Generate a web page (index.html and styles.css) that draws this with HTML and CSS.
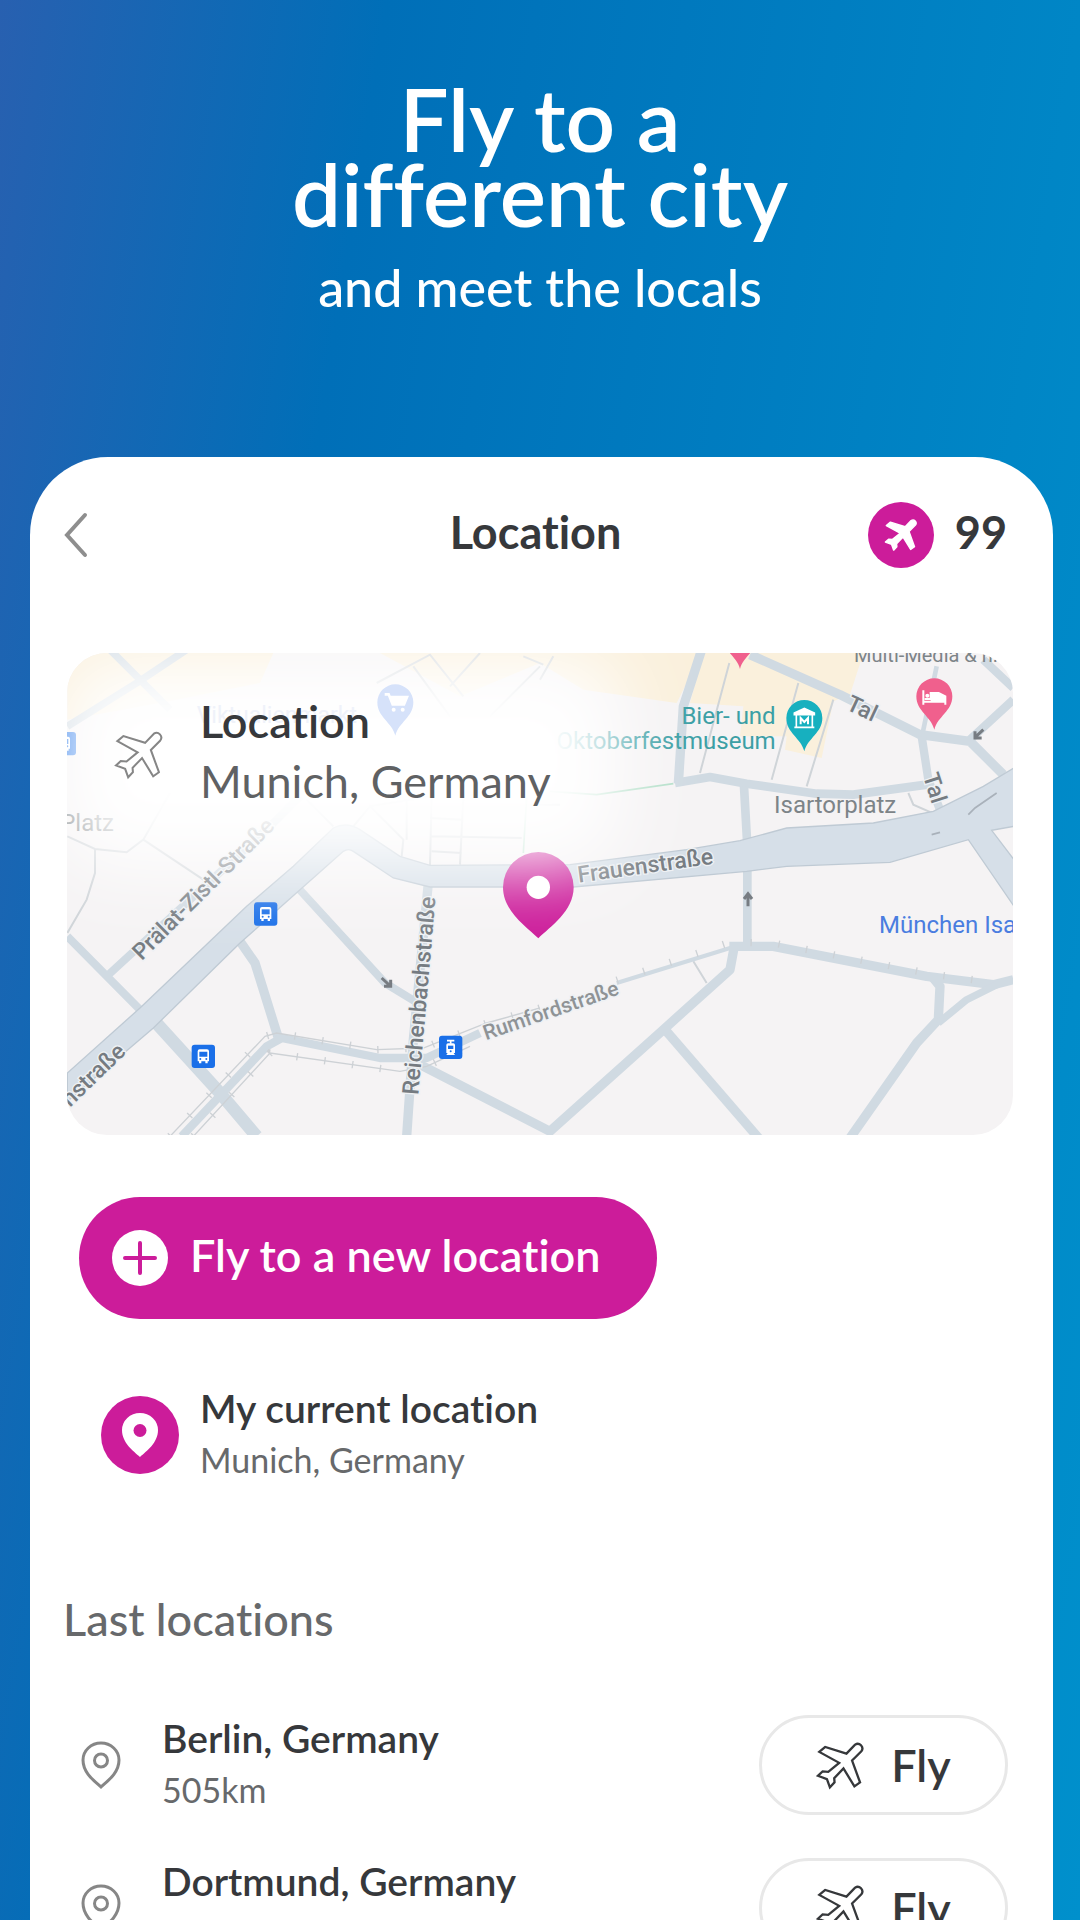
FILE: index.html
```
<!DOCTYPE html>
<html lang="en">
<head>
    <meta charset="UTF-8">
    <meta name="viewport" content="width=device-width, initial-scale=1.0">
    <title>Location</title>
    <link rel="stylesheet" href="styles.css">
</head>
<body>
    <!--shared icons-->
    <svg class="sprite" width="0" height="0" aria-hidden="true">
        <symbol id="plane" viewBox="0 0 148 148">
            <path d="M28 18 10 33 70 66 37 93 20 92 6 105 33 115 42 140 56 125 55 112 83 83 116 137 133 125 109 59 137 31A14 14 0 0 0 118 11L92 38Z"/>
        </symbol>
        <symbol id="pin" viewBox="0 0 80 96">
            <path d="M40 92C27 80 4 64 4 38a36 34 0 0 1 72 0C76 64 53 80 40 92Z"/>
            <circle class="dot" cx="40" cy="39" r="13"/>
        </symbol>
    </svg>

    <div class="page">
        <header class="hero">
            <h1>Fly to a<br>different city</h1>
            <p>and meet the locals</p>
        </header>

        <main class="card">
            <div class="topbar">
                <button class="back" aria-label="Back">
                    <svg width="24" height="46" viewBox="0 0 24 46"><path d="M21 3 3 23 21 43"/></svg>
                </button>
                <h2>Location</h2>
                <div class="credits">
                    <span class="badge"><svg width="34" height="34"><use href="#plane"/></svg></span>
                    <span>99</span>
                </div>
            </div>

            <section class="map">
                <svg class="map-art" viewBox="21 40 2838 1446" role="img" aria-label="Map of Munich">
                    <defs>
                        <filter id="soft" x="-40%" y="-70%" width="180%" height="240%"><feGaussianBlur stdDeviation="115"/></filter>
                        <g id="bus">
                            <rect width="70" height="70" rx="9" fill="#1a6fe8"/>
                            <path d="M18 20q0-6 6-6h22q6 0 6 6v30h-4v6h-7v-6H29v6h-7v-6h-4Z" fill="#fff"/>
                            <path d="M23 21h24v15H23Z" fill="#1a6fe8"/>
                            <circle cx="26" cy="43" r="3" fill="#1a6fe8"/>
                            <circle cx="44" cy="43" r="3" fill="#1a6fe8"/>
                        </g>
                        <path id="poi" d="M0 100C-10 60-54 45-54 0a54 54 0 0 1 108 0C54 45 10 60 0 100Z"/>
                    </defs>
                    <rect x="21" y="40" width="2838" height="1446" fill="#f5f3f4"/>

                    <!--shopping areas-->
                    <g fill="#faf0dc">
                        <path d="M22 40H640L600 130 300 190 22 240Z"/>
                        <path d="M960 40H1925L1850 190 1570 150 1440 70 1200 170Z"/>
                        <path d="M1930 40H2410L2370 165 2320 185 2285 355 2175 330 2180 290 2040 290 2050 200 1890 190Z"/>
                    </g>

                    <!--footpaths-->
                    <g fill="none" stroke="#cfd4d8" stroke-width="6">
                        <path d="M22 590 105 628 200 638 250 600 330 460M105 628V700L80 780 22 880M250 600 430 720"/>
                        <path d="M950 130 1110 45 1210 170M1060 80 1170 230M1170 140 1260 40M1290 230 1440 80M1390 50 1450 75"/>
                        <path d="M740 480 820 560M880 560 930 500 1030 600 1025 650M930 500 1115 470 1110 677M1210 470 1200 675M1040 480V600M1110 535 1210 540M1115 590 1385 595M1115 635 1205 640M1410 495 1500 495"/>
                        <path d="M1440 120 1480 50M2008 70 1920 400M2215 130 2135 420M2320 180 2240 440M2545 460 2560 495 2640 530M1900 965 1940 1030"/>
                    </g>
                    <path d="M1390 640 1400 470M1470 455 1610 465 1840 432" fill="none" stroke="#b4dfc9" stroke-width="5"/>

                    <!--small streets-->
                    <g fill="none" stroke="#d0dae2" stroke-width="28" stroke-linejoin="round">
                        <path d="M150 30 250 130 330 210M22 260 230 130 380 30" stroke-width="22"/>
                        <path d="M22 890 245 1115M140 1010 640 550 720 470" stroke-width="24"/>
                        <path d="M540 905 585 970 655 1195"/>
                        <path d="M710 740 975 1030 1065 1085" stroke-width="24"/>
                        <path d="M1105 730 1060 1200 1040 1490"/>
                        <path d="M280 1140 480 1360 590 1490" stroke-width="38"/>
                        <path d="M365 1490 620 1220 665 1195 960 1255 1100 1255 1260 1180" stroke-width="25"/>
                        <path d="M1080 1275 1470 1475 1810 1170 2010 990 2022 925"/>
                        <path d="M1815 1170 2100 1500"/>
                        <path d="M1670 1030 2020 922" stroke-width="12"/>
                        <path d="M2008 920 2140 920 2600 1010 2800 1035 2860 1020"/>
                        <path d="M2620 1015 2640 1040 2635 1140 2570 1210 2370 1495"/>
                        <path d="M2635 1150 2720 1080 2810 1035" stroke-width="22"/>
                        <path d="M1925 30 1870 200 1855 432"/>
                        <path d="M1845 430 1950 412 2060 432 2270 462 2380 465 2600 435" stroke-width="26"/>
                        <path d="M2052 440 2062 620M2062 680V915" stroke-width="26"/>
                        <path d="M2070 45 2340 165 2580 285 2730 305 2830 405"/>
                        <path d="M2630 80 2588 280" stroke-width="14"/>
                        <path d="M2585 290 2605 420 2640 510" stroke-width="25"/>
                        <path d="M2730 300 2860 180M2770 60 2860 145" stroke-width="25"/>
                    </g>

                    <!--tram rails-->
                    <g fill="none" stroke="#cdd1d5">
                        <path d="M330 1490 615 1190 650 1180 950 1230 1090 1225 1280 1150 1440 1105M400 1490 630 1240 1020 1295 1100 1280 1230 1220" stroke-width="4"/>
                        <path d="M330 1490 615 1190 650 1180 950 1230 1090 1225 1280 1150 1440 1105M400 1490 630 1240 1020 1295 1100 1280 1230 1220M1670 1022 2010 908 2140 910 2620 1004 2800 1028" stroke-width="22" stroke-dasharray="4 80"/>
                    </g>

                    <!--main street-->
                    <path d="M22 1300 240 1105 560 800 700 680 820 565Q860 545 900 570L1020 650 1110 677 1530 675 1880 630 2040 603 2180 565 2440 550 2620 515 2770 440 2862 385V560L2795 572 2862 660V800L2725 600 2490 668 2180 680 2060 695 1540 742H1110L1000 715 880 635Q865 625 850 635L720 750 540 910 280 1165 22 1385Z" fill="#d6dfe8" stroke="#bfcad4" stroke-width="4"/>
                    <path d="M2725 525 2745 505 2810 460M2615 585 2640 578" fill="none" stroke="#a9b1ba" stroke-width="5"/>

                    <!--one way arrows-->
                    <g fill="none" stroke="#777c82" stroke-width="9">
                        <path d="M2064 800V765M2052 778 2064 762 2076 778"/>
                        <path d="M2770 270 2745 293M2745 275V295H2765"/>
                        <path d="M965 1015 992 1040M992 1020V1040H972"/>
                    </g>

                    <!--street names-->
                    <g class="street">
                        <text transform="translate(245 965) rotate(-45)">Prälat-Zistl-Straße</text>
                        <text transform="translate(1075 1367) rotate(-85)">Reichenbachstraße</text>
                        <text transform="translate(30 1404) rotate(-44)">nstraße</text>
                        <text transform="translate(1556 729) rotate(-8)">Frauenstraße</text>
                        <text class="side" transform="translate(1278 1202) rotate(-19)">Rumfordstraße</text>
                        <text transform="translate(2355 208) rotate(25)">Tal</text>
                        <text transform="translate(2588 408) rotate(72)">Tal</text>
                    </g>
                    <g class="place">
                        <text x="162" y="575" text-anchor="end">Platz</text>
                        <text x="2142" y="521">Isartorplatz</text>
                        <text x="2382" y="68" class="small">Multi-Media &amp; h.</text>
                        <text x="2457" y="879" fill="#4a7de0">München Isa</text>
                        <text x="2147" y="254" text-anchor="end" fill="#3c9fa5">Bier- und</text>
                        <text x="2147" y="329" text-anchor="end" fill="#3c9fa5">Oktoberfestmuseum</text>
                    </g>

                    <!--stops and places-->
                    <use href="#bus" x="582" y="788"/>
                    <use href="#bus" x="395" y="1215"/>
                    <use href="#bus" x="-22" y="277"/>
                    <g transform="translate(1137 1188)">
                        <rect width="70" height="70" rx="9" fill="#1a6fe8"/>
                        <path d="M24 15h22M35 15v9" stroke="#fff" stroke-width="5"/>
                        <path d="M22 28q0-5 5-5h16q5 0 5 5v24h-4l4 6H22l4-6h-4Z" fill="#fff"/>
                        <path d="M27 30h16v10H27Z" fill="#1a6fe8"/>
                        <circle cx="35" cy="47" r="3" fill="#1a6fe8"/>
                    </g>
                    <use href="#poi" x="2233" y="235" fill="#17b0bf"/>
                    <path d="M2203 225V220L2233 206 2263 220V225ZM2209 227V262M2257 227V262M2203 263H2263" fill="#fff" stroke="#fff" stroke-width="5"/>
                    <path d="M2222 254V235L2233 247 2244 235V254" fill="none" stroke="#fff" stroke-width="6"/>
                    <use href="#poi" x="2623" y="170" fill="#f0608d"/>
                    <path d="M2590 152V195M2590 186H2656M2656 195V170L2636 160H2612V178H2594" fill="none" stroke="#fff" stroke-width="6"/>
                    <path d="M2612 160H2636L2656 170V184H2612Z" fill="#fff"/>
                    <circle cx="2602" cy="168" r="6" fill="#fff"/>
                    <use href="#poi" x="2040" y="-12" fill="#f0608d"/>

                    <!--current position, the haze keeps the caption readable-->
                    <path d="M1435 896C1400 862 1329 815 1329 743a106 106 0 0 1 212 0C1541 815 1470 862 1435 896Z" fill="#cc1c9a"/>
                    <rect x="0" y="50" width="1680" height="630" rx="140" fill="#fff" filter="url(#soft)"/>
                    <circle cx="1435" cy="743" r="35" fill="#fff"/>

                    <!--market, almost hidden by the haze-->
                    <use href="#poi" x="1006" y="188" fill="#d6e2fa"/>
                    <path d="M974 164h12l12 30h34l9-22H990" fill="none" stroke="#fff" stroke-width="8"/>
                    <path d="M991 172h50l-9 22h-34Z" fill="#fff"/>
                    <circle cx="1001" cy="210" r="6" fill="#fff"/>
                    <circle cx="1028" cy="210" r="6" fill="#fff"/>
                    <text class="market" x="410" y="250">Viktualienmarkt</text>
                </svg>
                <div class="map-caption">
                    <svg class="outline" width="50" height="50"><use href="#plane"/></svg>
                    <div>
                        <h3>Location</h3>
                        <p>Munich, Germany</p>
                    </div>
                </div>
            </section>

            <button class="fly-new">
                <svg width="56" height="56" viewBox="0 0 56 56"><circle cx="28" cy="28" r="28"/><path d="M28 13V43M13 28H43"/></svg>
                Fly to a new location
            </button>

            <div class="place-row current">
                <span class="marker"><svg width="40" height="48"><use href="#pin"/></svg></span>
                <div class="place-text">
                    <h3>My current location</h3>
                    <p>Munich, Germany</p>
                </div>
            </div>

            <h2 class="list-title">Last locations</h2>
            <ul class="locations">
                <li class="place-row">
                    <svg class="outline" width="40" height="48"><use href="#pin"/></svg>
                    <div class="place-text">
                        <h3>Berlin, Germany</h3>
                        <p>505km</p>
                    </div>
                    <button class="fly"><svg width="49" height="49"><use href="#plane"/></svg>Fly</button>
                </li>
                <li class="place-row">
                    <svg class="outline" width="40" height="48"><use href="#pin"/></svg>
                    <div class="place-text">
                        <h3>Dortmund, Germany</h3>
                    </div>
                    <button class="fly"><svg width="49" height="49"><use href="#plane"/></svg>Fly</button>
                </li>
            </ul>
        </main>
    </div>
</body>
</html>
```
FILE: styles.css
```
*{
    box-sizing: border-box;
}
body{
    margin: 0;
    font-family: Lato, "Open Sans", sans-serif;
    font-variant-ligatures: none;
    color: #36383b;
}
h1,h2,h3,p,ul{
    margin: 0;
    padding: 0;
}
h2,h3{
    font-weight: 600;
}
button{
    font: inherit;
    font-variant-ligatures: none;
    color: inherit;
    border: none;
    background: none;
    padding: 0;
    cursor: pointer;
}
svg{
    display: block;
    flex: none;
}
.sprite{
    position: absolute;
}
.page{
    height: 100vh;
    overflow: hidden;
    padding-top: 81px;
    background: linear-gradient(99deg, #2860b0 0%, #006fb8 28%, #0090cc 100%);
}
.hero{
    text-align: center;
    color: #fff;
    padding-bottom: 140px;
}
.hero h1{
    font-size: 87px;
    line-height: 75px;
    font-weight: 600;
}
.hero p{
    margin-top: 26px;
    font-size: 52px;
    line-height: 60px;
    font-weight: 500;
}
.card{
    margin: 0 27px 0 30px;
    min-height: 100vh;
    padding-top: 45px;
    background: #fff;
    border-radius: 78px 78px 0 0;
}

/* top bar */
.topbar{
    display: grid;
    grid-template-columns: 1fr auto 1fr;
    padding: 0 46px 0 34px;
    font-size: 45px;
    line-height: 60px;
    font-weight: 700;
}
.topbar h2{
    font-size: 45px;
    font-weight: 700;
}
.back{
    justify-self: start;
    height: 66px;
}
.back path{
    fill: none;
    stroke: #8e8e8e;
    stroke-width: 4;
    stroke-linecap: round;
}
.credits{
    display: flex;
    justify-content: flex-end;
    gap: 21px;
}
.badge,.marker{
    display: flex;
    align-items: center;
    justify-content: center;
    flex: none;
    border-radius: 50%;
    background: #cc1c9a;
    fill: #fff;
}
.badge{
    width: 66px;
    height: 66px;
    stroke: #fff;
    stroke-width: 6;
    stroke-linejoin: round;
}

/* map */
.map{
    position: relative;
    margin: 85px 40px 62px 37px;
    border-radius: 40px;
    overflow: hidden;
}
.map-art{
    width: 100%;
    height: auto;
}
.map text{
    font-family: Roboto, sans-serif;
}
.street{
    font-size: 69px;
    font-weight: 500;
    fill: #757b81;
    stroke: #eef1f4;
    stroke-width: 8px;
    paint-order: stroke;
}
.side{
    font-size: 63px;
    fill: #8f9396;
}
.place{
    font-size: 72px;
    fill: #7d8488;
}
.market{
    font-size: 69px;
    fill: #eff2fa;
}
.small{
    font-size: 60px;
}
.map-caption{
    position: absolute;
    top: 38px;
    left: 47px;
    display: flex;
    align-items: center;
    gap: 36px;
    line-height: 60px;
}
.map-caption svg{
    margin-top: 8px;
}
.map-caption h3{
    font-size: 45px;
}
.map-caption p{
    font-size: 45px;
    color: #5f6163;
}
.outline{
    fill: none;
    stroke: #868686;
    stroke-width: 6;
}

/* buttons */
.fly-new{
    display: flex;
    gap: 22px;
    margin-left: 49px;
    padding: 33px 56px;
    border-radius: 61px;
    padding-left: 33px;
    background: #cc1c9a;
    color: #fff;
    font-size: 45px;
    line-height: 50px;
    font-weight: 600;
}
.fly-new circle{
    fill: #fff;
}
.fly-new path{
    stroke: #cc1c9a;
    stroke-width: 4;
    stroke-linecap: round;
}
.fly{
    display: flex;
    align-items: center;
    justify-content: center;
    gap: 26px;
    width: 249px;
    height: 100px;
    border: 3px solid #e8e8e8;
    border-radius: 50px;
    font-size: 45px;
    font-weight: 600;
}
.fly svg{
    fill: none;
    stroke: #36383b;
    stroke-width: 7;
}

/* locations */
.place-row{
    display: flex;
    align-items: center;
    gap: 41px;
    min-height: 104px;
    padding: 0 45px 0 51px;
}
.place-text{
    flex: 1;
    align-self: flex-start;
}
.place-text h3{
    font-size: 39px;
    line-height: 50px;
}
.place-text p{
    font-size: 34px;
    line-height: 54px;
    color: #67696b;
}
.current{
    gap: 21px;
    margin-top: 64px;
    padding-left: 71px;
}
.marker{
    --dot: #cc1c9a;
    width: 78px;
    height: 78px;
}
.dot{
    fill: var(--dot, none);
}
.list-title{
    margin: 102px 0 64px 33px;
    font-size: 45px;
    line-height: 60px;
    font-weight: 500;
    color: #67696b;
}
.locations{
    display: flex;
    flex-direction: column;
    gap: 39px;
    list-style: none;
}
```
